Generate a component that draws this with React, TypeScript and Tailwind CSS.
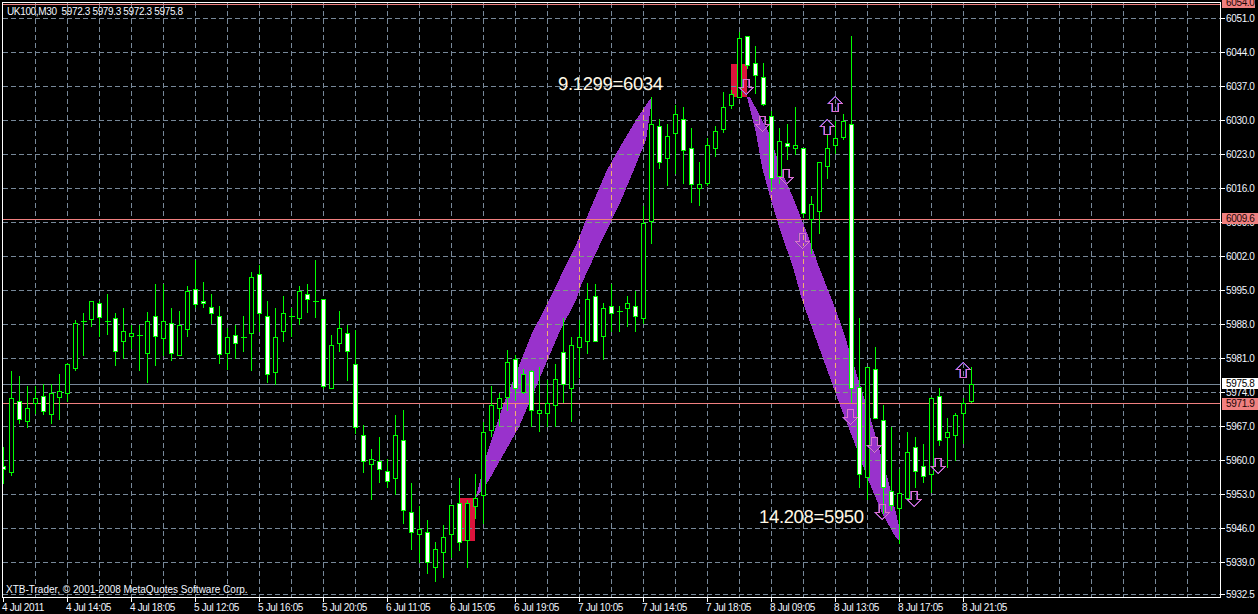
const candles: [number, number, number, number, number][] = [
  [447, 466, 469, 483, 1], [371, 398, 472, 475, 0], [376, 401, 419, 423, 1], [386, 408, 421, 427, 0],
  [386, 398, 403, 413, 0], [384, 396, 411, 414, 1], [384, 393, 414, 423, 0], [374, 391, 397, 419, 0],
  [363, 364, 393, 401, 0], [320, 323, 368, 370, 0], [313, 321, 321, 355, 0], [301, 301, 319, 326, 0],
  [301, 303, 317, 336, 1], [294, 321, 321, 334, 0], [313, 318, 351, 365, 1], [308, 331, 341, 358, 0],
  [325, 333, 336, 348, 0], [325, 335, 335, 370, 0], [312, 321, 353, 382, 0], [284, 316, 336, 365, 1],
  [284, 321, 338, 355, 0], [308, 323, 353, 360, 1], [311, 325, 355, 355, 0], [286, 291, 329, 336, 0],
  [260, 289, 304, 307, 1], [282, 301, 303, 307, 1], [294, 307, 313, 323, 1], [306, 316, 354, 363, 1],
  [328, 337, 353, 369, 0], [325, 335, 343, 358, 1], [316, 337, 337, 351, 0], [272, 277, 333, 370, 0],
  [265, 274, 313, 331, 1], [301, 316, 374, 382, 1], [308, 337, 372, 384, 0], [296, 313, 331, 341, 0],
  [308, 316, 316, 336, 0], [286, 291, 318, 324, 0], [284, 294, 299, 312, 1], [260, 301, 301, 317, 0],
  [299, 299, 386, 388, 1], [335, 345, 388, 388, 0], [311, 328, 343, 351, 0], [325, 333, 351, 380, 1],
  [330, 364, 427, 433, 1], [425, 435, 461, 472, 1], [449, 459, 464, 499, 0], [437, 461, 469, 482, 1],
  [459, 471, 481, 487, 1], [415, 435, 478, 494, 0], [410, 440, 510, 523, 1], [483, 512, 532, 549, 1],
  [506, 529, 534, 562, 0], [520, 532, 562, 573, 1], [542, 549, 567, 581, 0], [525, 537, 552, 577, 0],
  [505, 505, 534, 557, 0], [478, 503, 542, 550, 1], [500, 503, 540, 567, 0], [474, 498, 506, 518, 0],
  [422, 432, 495, 523, 0], [386, 405, 430, 436, 0], [393, 398, 408, 425, 0], [350, 362, 397, 410, 0],
  [355, 359, 388, 400, 1], [369, 374, 392, 393, 0], [370, 371, 410, 426, 1], [367, 410, 413, 431, 0],
  [380, 403, 413, 426, 0], [364, 379, 405, 426, 0], [318, 352, 384, 402, 1], [337, 345, 388, 421, 0],
  [320, 337, 347, 377, 0], [283, 299, 341, 353, 0], [284, 296, 341, 341, 1], [303, 308, 336, 359, 0],
  [284, 306, 313, 331, 1], [306, 311, 311, 331, 0], [296, 303, 308, 326, 0], [291, 306, 316, 331, 1],
  [206, 223, 318, 323, 0], [97, 124, 221, 243, 0], [119, 126, 162, 168, 1], [124, 136, 158, 185, 0],
  [105, 114, 133, 173, 0], [107, 119, 150, 183, 1], [128, 148, 184, 202, 1], [162, 184, 188, 205, 0],
  [138, 145, 183, 185, 0], [126, 131, 148, 156, 0], [92, 107, 129, 132, 0], [90, 94, 105, 108, 0],
  [32, 38, 97, 97, 0], [36, 36, 65, 68, 1], [46, 63, 75, 93, 1], [63, 77, 104, 105, 1],
  [111, 116, 178, 190, 1], [128, 141, 176, 183, 0], [124, 143, 146, 159, 1], [107, 145, 148, 154, 0],
  [148, 148, 213, 217, 1], [196, 204, 219, 253, 0], [162, 162, 211, 233, 0], [134, 148, 166, 178, 0],
  [121, 138, 145, 153, 0], [114, 121, 137, 139, 0], [36, 124, 388, 402, 1], [318, 387, 474, 487, 1],
  [367, 367, 477, 499, 0], [347, 369, 418, 418, 1], [405, 420, 487, 513, 1], [427, 491, 505, 510, 1],
  [469, 493, 508, 543, 0], [432, 452, 498, 500, 0], [437, 447, 471, 487, 1], [444, 466, 476, 482, 1],
  [397, 398, 474, 492, 0], [388, 396, 440, 445, 1], [418, 432, 437, 467, 0], [413, 415, 435, 460, 0],
  [398, 403, 413, 443, 0], [367, 384, 401, 402, 0],
];

const bandPoints = [
  "476,497 486,457 504,403 532,333 544,310 576,245 591,207 607,170 620,147 638,117 650,99 652,99 646,140 635,167 620,203 603,238 582,283 576,300 559,333 519,427 502,457 489,480 477,497",
  "747,97 756,133 762,167 771,200 781,233 793,267 802,300 838,400 856,447 867,477 882,513 896,538 900,541 900,530 888,480 871,420 842,327 832,300 819,267 807,233 794,200 780,167 769,133 750,97",
];

const downArrows = [[746, 79], [762, 116], [786, 169], [802, 233], [850, 409], [874, 437], [882, 504], [914, 491], [938, 458]];
const upArrows = [[827, 119], [835, 96], [963, 362]];

const gridY = [18, 52, 86, 120, 154, 188, 222, 256, 290, 324, 358, 392, 426, 460, 494, 528, 562, 594];
const gridX = Array.from({ length: 37 }, (_, i) => 35 + i * 32);

const prices = ["6051.0", "6044.0", "6037.0", "6030.0", "6023.0", "6016.0", "6009.0", "6002.0", "5995.0", "5988.0", "5981.0", "5974.0", "5967.0", "5960.0", "5953.0", "5946.0", "5939.0"];
const times = ["4 Jul 2011", "4 Jul 14:05", "4 Jul 18:05", "5 Jul 12:05", "5 Jul 16:05", "5 Jul 20:05", "6 Jul 11:05", "6 Jul 15:05", "6 Jul 19:05", "7 Jul 10:05", "7 Jul 14:05", "7 Jul 18:05", "8 Jul 09:05", "8 Jul 13:05", "8 Jul 17:05", "8 Jul 21:05"];

const arrowDown = "-3,0 3,0 3,8 7,8 0,15 -7,8 -3,8";
const arrowUp = "0,0 7,7 3,7 3,15 -3,15 -3,7 -7,7";

// pink outline with a dim fringe on the left, like the terminal draws it
const Arrow = ({ x, y, points, fringe }: { x: number; y: number; points: string; fringe: string }) => (
  <g transform={`translate(${x + 0.5} ${y + 0.5})`} fill="none">
    <polygon points={points} stroke={fringe} transform="translate(-1 0)" />
    <polygon points={points} stroke="#e070d0" />
  </g>
);

const Chart = () => (
  <svg width="1217" height="594" viewBox="3 3 1217 594" className="block" shapeRendering="crispEdges">
    <defs>
      <clipPath id="bands">
        {bandPoints.map((p) => (
          <polygon key={p} points={p} />
        ))}
      </clipPath>
    </defs>

    {/* flagged bars */}
    <rect x="459" y="498" width="16" height="43" fill="#dc143c" />
    <rect x="731" y="64" width="16" height="33" fill="#dc143c" />

    {bandPoints.map((p) => (
      <polygon key={p} points={p} fill="#9932cc" />
    ))}

    <g stroke="#778899" strokeDasharray="5 3">
      {gridY.map((y) => (
        <line key={y} x1="3" x2="1220" y1={y + 0.5} y2={y + 0.5} />
      ))}
      {gridX.map((x) => (
        <line key={x} x1={x + 0.5} x2={x + 0.5} y1="3" y2="597" />
      ))}
    </g>
    <g clipPath="url(#bands)" strokeDasharray="5 3">
      {gridY.map((y) => (
        <line key={y} x1="3" x2="1220" y1={y + 0.5} y2={y + 0.5} stroke="#7f9a86" />
      ))}
      {gridX.map((x) => (
        <line key={x} x1={x + 0.5} x2={x + 0.5} y1="3" y2="597" stroke="#f0b070" />
      ))}
    </g>

    <line x1="3" x2="1220" y1="4.5" y2="4.5" stroke="#f08080" />
    <line x1="3" x2="1220" y1="219.5" y2="219.5" stroke="#f08080" />
    <line x1="3" x2="1220" y1="403.5" y2="403.5" stroke="#f08080" />
    <line x1="3" x2="1220" y1="384.5" y2="384.5" stroke="#778899" />

    {candles.map(([wt, bt, bb, wb, white], i) => {
      const x = 3.5 + i * 8;
      return (
        <g key={i} stroke="#00ff00">
          <line x1={x} x2={x} y1={wt} y2={wb + 1} />
          {bt === bb ? (
            <line x1={x - 2.5} x2={x + 3} y1={bt + 0.5} y2={bt + 0.5} />
          ) : (
            <rect x={x - 2} y={bt + 0.5} width="4" height={bb - bt} fill={white ? "#ffffff" : "#000000"} />
          )}
        </g>
      );
    })}

    {downArrows.map(([x, y]) => (
      <Arrow key={`${x}-${y}`} x={x} y={y} points={arrowDown} fringe="#7a4ab0" />
    ))}
    {upArrows.map(([x, y]) => (
      <Arrow key={`${x}-${y}`} x={x} y={y} points={arrowUp} fringe="#4a50c0" />
    ))}

    <text x="558" y="90" fontSize="18.5" fill="#fff8e6" fontFamily="'Liberation Sans', sans-serif" textRendering="geometricPrecision">9.1299=6034</text>
    <text x="759" y="523" fontSize="18.5" fill="#fff8e6" fontFamily="'Liberation Sans', sans-serif" textRendering="geometricPrecision">14.208=5950</text>
  </svg>
);

export default function App() {
  return (
    <div className="w-[1258px] h-[614px] overflow-hidden bg-black pt-[2px] pl-[2px] text-[10px] leading-[11px] tracking-[-0.35px] text-[#f2f6ff] font-['Liberation_Sans',sans-serif]">
      <div className="flex">
        <div className="relative border border-white">
          <Chart />
          <div className="absolute left-[4px] top-[3px] whitespace-pre">UK100,M30  5972.3 5979.3 5972.3 5975.8</div>
          <div className="absolute left-[3px] top-[581px] whitespace-pre tracking-[0px]">XTB-Trader, © 2001-2008 MetaQuotes Software Corp.</div>
        </div>

        {/* price scale */}
        <div className="relative w-[37px] h-[596px] pt-[11px]">
          {prices.map((p) => (
            <div key={p} className="flex h-[34px] items-start">
              <div className="mt-[5px] h-px w-[4px] bg-white" />
              <span className="ml-[1px]">{p}</span>
            </div>
          ))}
          <div className="-mt-[2px] flex h-[11px] items-start">
            <div className="mt-[5px] h-px w-[4px] bg-white" />
            <span className="ml-[1px]">5932.5</span>
          </div>
          <div className="absolute left-[1px] -top-[5px] h-[11px] w-[33px] bg-[#f08080] pl-[4px] text-[#1a0505]">6054.0</div>
          <div className="absolute left-[1px] top-[211px] h-[11px] w-[36px] bg-[#f08080] pl-[4px] text-[#1a0505]">6009.6</div>
          <div className="absolute left-[1px] top-[376px] h-[11px] w-[36px] bg-white pl-[4px] text-black">5975.8</div>
          <div className="absolute left-[1px] top-[396px] h-[12px] w-[36px] bg-[#f08080] pl-[4px] text-[#1a0505]">5971.9</div>
        </div>
      </div>

      {/* time scale */}
      <div className="ml-[1px] flex">
        {times.map((t) => (
          <div key={t} className="w-[64px] shrink-0">
            <div className="h-[4px] w-px bg-white" />
            <div className="-ml-[1px] whitespace-pre">{t}</div>
          </div>
        ))}
      </div>
    </div>
  );
}
